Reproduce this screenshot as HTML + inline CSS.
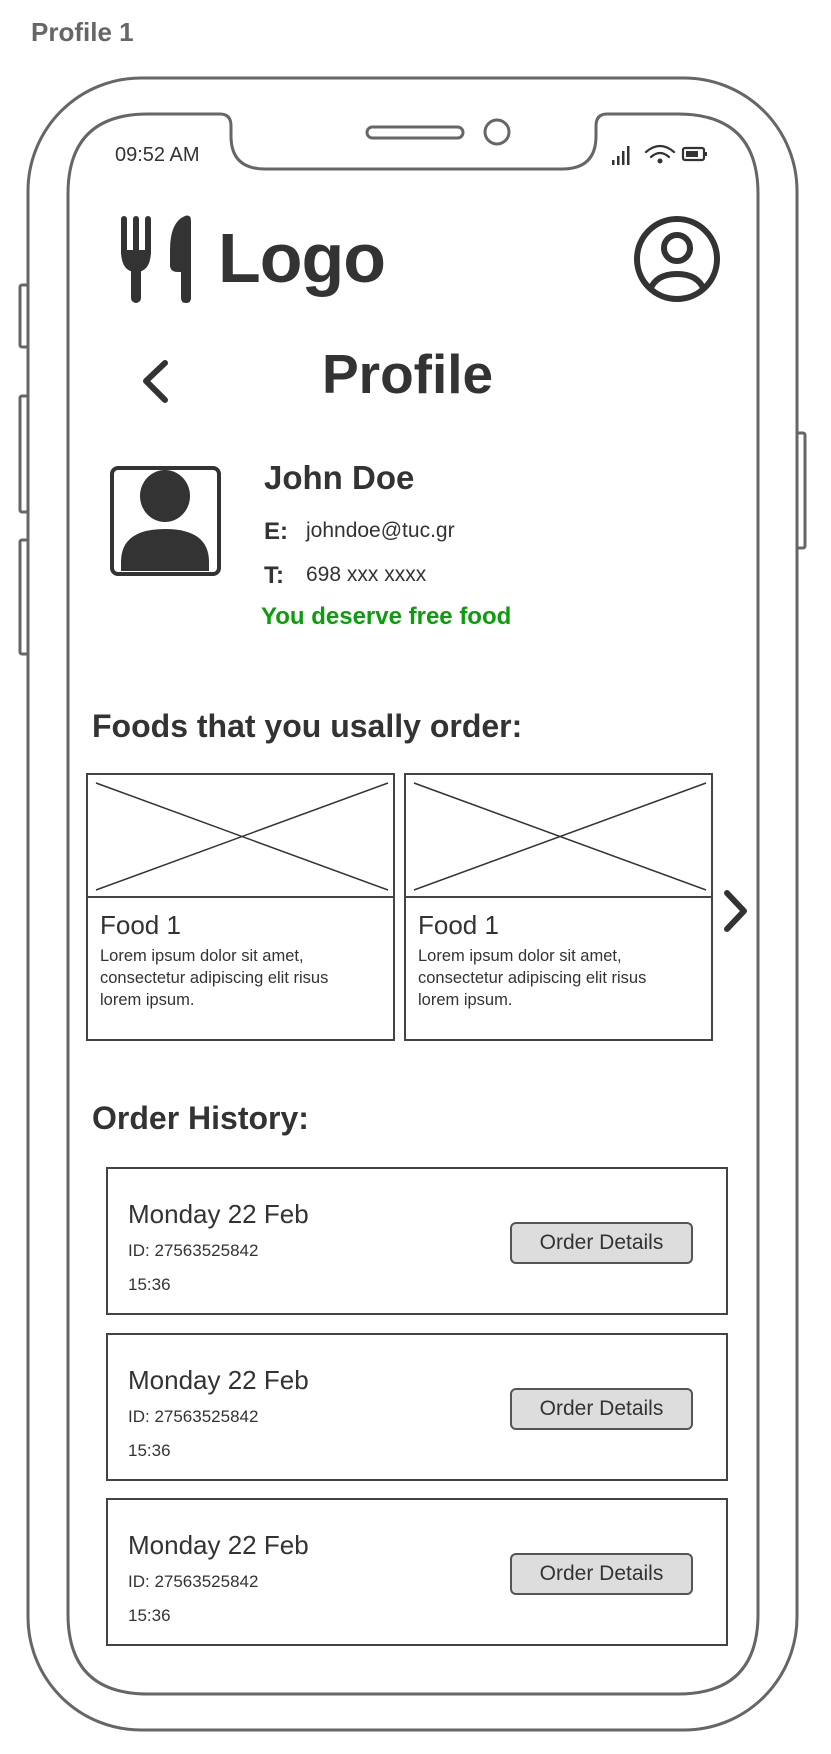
<!DOCTYPE html>
<html><head><meta charset="utf-8"><style>
*{margin:0;padding:0;box-sizing:border-box}
body{width:831px;height:1754px;background:#fff;position:relative;overflow:hidden;font-family:"Liberation Sans",sans-serif;color:#333}
.a{position:absolute;white-space:nowrap}
.card{position:absolute;border:2px solid #444;background:#fff}
.ob{position:absolute;left:106px;width:622px;height:148px;border:2px solid #444}
.ob .d{position:absolute;left:20px;top:30px;font-size:26px}
.ob .i{position:absolute;left:20px;top:72px;font-size:17px}
.ob .t{position:absolute;left:20px;top:106px;font-size:17px}
.ob .b{position:absolute;left:402px;top:53px;width:183px;height:42px;background:#ddd;border:2px solid #555;border-radius:6px;font-size:21px;text-align:center;line-height:38px}
.fd{position:absolute;left:12px;top:135px;font-size:26px}
.fl{position:absolute;left:12px;top:170px;font-size:16.5px;line-height:22px;white-space:normal;width:262px}
</style></head><body>
<div class="a" style="left:31px;top:17px;font-size:26px;font-weight:bold;color:#666">Profile 1</div>
<svg class="a" style="left:0;top:0" width="831" height="1754">
<g fill="none" stroke="#666" stroke-width="3">
<rect x="28" y="78" width="769" height="1652" rx="113"/>
<rect x="20" y="285" width="8" height="62" rx="2"/>
<rect x="20" y="396" width="8" height="116" rx="2"/>
<rect x="20" y="540" width="8" height="114" rx="2"/>
<rect x="797" y="433" width="8" height="115" rx="2"/>
<path d="M148 114 H220 Q231 114 231 126 V136 Q231 169 265 169 H562 Q596 169 596 136 V126 Q596 114 607 114 H678 Q758 114 758 194 V1614 Q758 1694 678 1694 H148 Q68 1694 68 1614 V194 Q68 114 148 114 Z"/>
<rect x="367" y="127" width="96" height="11" rx="5.5"/>
<circle cx="497" cy="132" r="12"/>
</g>
<g fill="#333">
<rect x="612" y="160" width="2.5" height="5"/><rect x="617" y="156" width="2.5" height="9"/><rect x="622" y="151" width="2.5" height="14"/><rect x="627" y="146" width="2.5" height="19"/>
<circle cx="660" cy="161" r="2.5"/>
</g>
<g fill="none" stroke="#333" stroke-width="2.2" stroke-linecap="round">
<path d="M646 152 Q660 140 674 152"/><path d="M651 157 Q660 149 669 157"/>
<rect x="683" y="148" width="21" height="12" rx="2"/>
</g>
<rect x="686" y="151" width="12" height="6" fill="#333"/><rect x="705" y="152" width="2" height="4" fill="#333"/>
<g fill="#333">
<rect x="121" y="216" width="6" height="40" rx="3"/><rect x="133" y="216" width="6" height="40" rx="3"/><rect x="145" y="216" width="6" height="40" rx="3"/>
<path d="M121 250 Q121 272 136 272 Q151 272 151 250 Z"/>
<rect x="131" y="262" width="10" height="41" rx="5"/>
<path d="M185 216 Q170 222 170 250 L170 265 Q170 272 178 272 L181 272 L181 298 Q181 303 186 303 Q191 303 191 298 L191 221 Q191 214 185 216 Z"/>
</g>
<g fill="none" stroke="#333" stroke-width="6">
<circle cx="677" cy="259" r="40"/>
<circle cx="677" cy="248" r="13"/>
<path d="M650 290 Q656 274 677 274 Q698 274 704 290"/>
</g>
<path d="M165 363 L146 381 L165 400" fill="none" stroke="#333" stroke-width="6" stroke-linecap="round" stroke-linejoin="round"/>
<rect x="112" y="468" width="107" height="106" rx="6" fill="none" stroke="#333" stroke-width="4"/>
<ellipse cx="165" cy="496" rx="25" ry="26" fill="#333"/>
<path d="M121 571 L121 562 Q121 529 165 529 Q209 529 209 562 L209 571 Z" fill="#333"/>
<path d="M727 893 L744 911 L727 929" fill="none" stroke="#333" stroke-width="6" stroke-linecap="round" stroke-linejoin="round"/>
</svg>
<div class="a" style="left:218px;top:218px;font-size:70px;font-weight:bold;letter-spacing:-1px">Logo</div>
<div class="a" style="left:322px;top:342px;font-size:55px;font-weight:bold">Profile</div>
<div class="a" style="left:115px;top:144px;font-size:20px">09:52 AM</div>
<div class="a" style="left:264px;top:459px;font-size:33px;font-weight:bold">John Doe</div>
<div class="a" style="left:264px;top:518px;font-size:24px;font-weight:bold">E:</div>
<div class="a" style="left:306px;top:519px;font-size:21px">johndoe@tuc.gr</div>
<div class="a" style="left:264px;top:562px;font-size:24px;font-weight:bold">T:</div>
<div class="a" style="left:306px;top:563px;font-size:21px">698 xxx xxxx</div>
<div class="a" style="left:261px;top:603px;font-size:24px;font-weight:bold;color:#0c9c0c">You deserve free food</div>
<div class="a" style="left:92px;top:708px;font-size:32px;font-weight:bold">Foods that you usally order:</div>
<div class="card" style="left:86px;top:773px;width:309px;height:268px">
<svg style="position:absolute;left:0;top:0" width="305" height="124"><path d="M8 8 L300 115 M300 8 L8 115" stroke="#333" stroke-width="1.5"/><line x1="0" y1="122" x2="305" y2="122" stroke="#444" stroke-width="2"/></svg>
<div class="fd">Food 1</div><div class="fl">Lorem ipsum dolor sit amet, consectetur adipiscing elit risus lorem ipsum.</div></div>
<div class="card" style="left:404px;top:773px;width:309px;height:268px">
<svg style="position:absolute;left:0;top:0" width="305" height="124"><path d="M8 8 L300 115 M300 8 L8 115" stroke="#333" stroke-width="1.5"/><line x1="0" y1="122" x2="305" y2="122" stroke="#444" stroke-width="2"/></svg>
<div class="fd">Food 1</div><div class="fl">Lorem ipsum dolor sit amet, consectetur adipiscing elit risus lorem ipsum.</div></div>
<div class="a" style="left:92px;top:1100px;font-size:32px;font-weight:bold">Order History:</div>
<div class="ob" style="top:1167px"><div class="d">Monday 22 Feb</div><div class="i">ID: 27563525842</div><div class="t">15:36</div><div class="b">Order Details</div></div>
<div class="ob" style="top:1333px"><div class="d">Monday 22 Feb</div><div class="i">ID: 27563525842</div><div class="t">15:36</div><div class="b">Order Details</div></div>
<div class="ob" style="top:1498px"><div class="d">Monday 22 Feb</div><div class="i">ID: 27563525842</div><div class="t">15:36</div><div class="b">Order Details</div></div>
</body></html>
